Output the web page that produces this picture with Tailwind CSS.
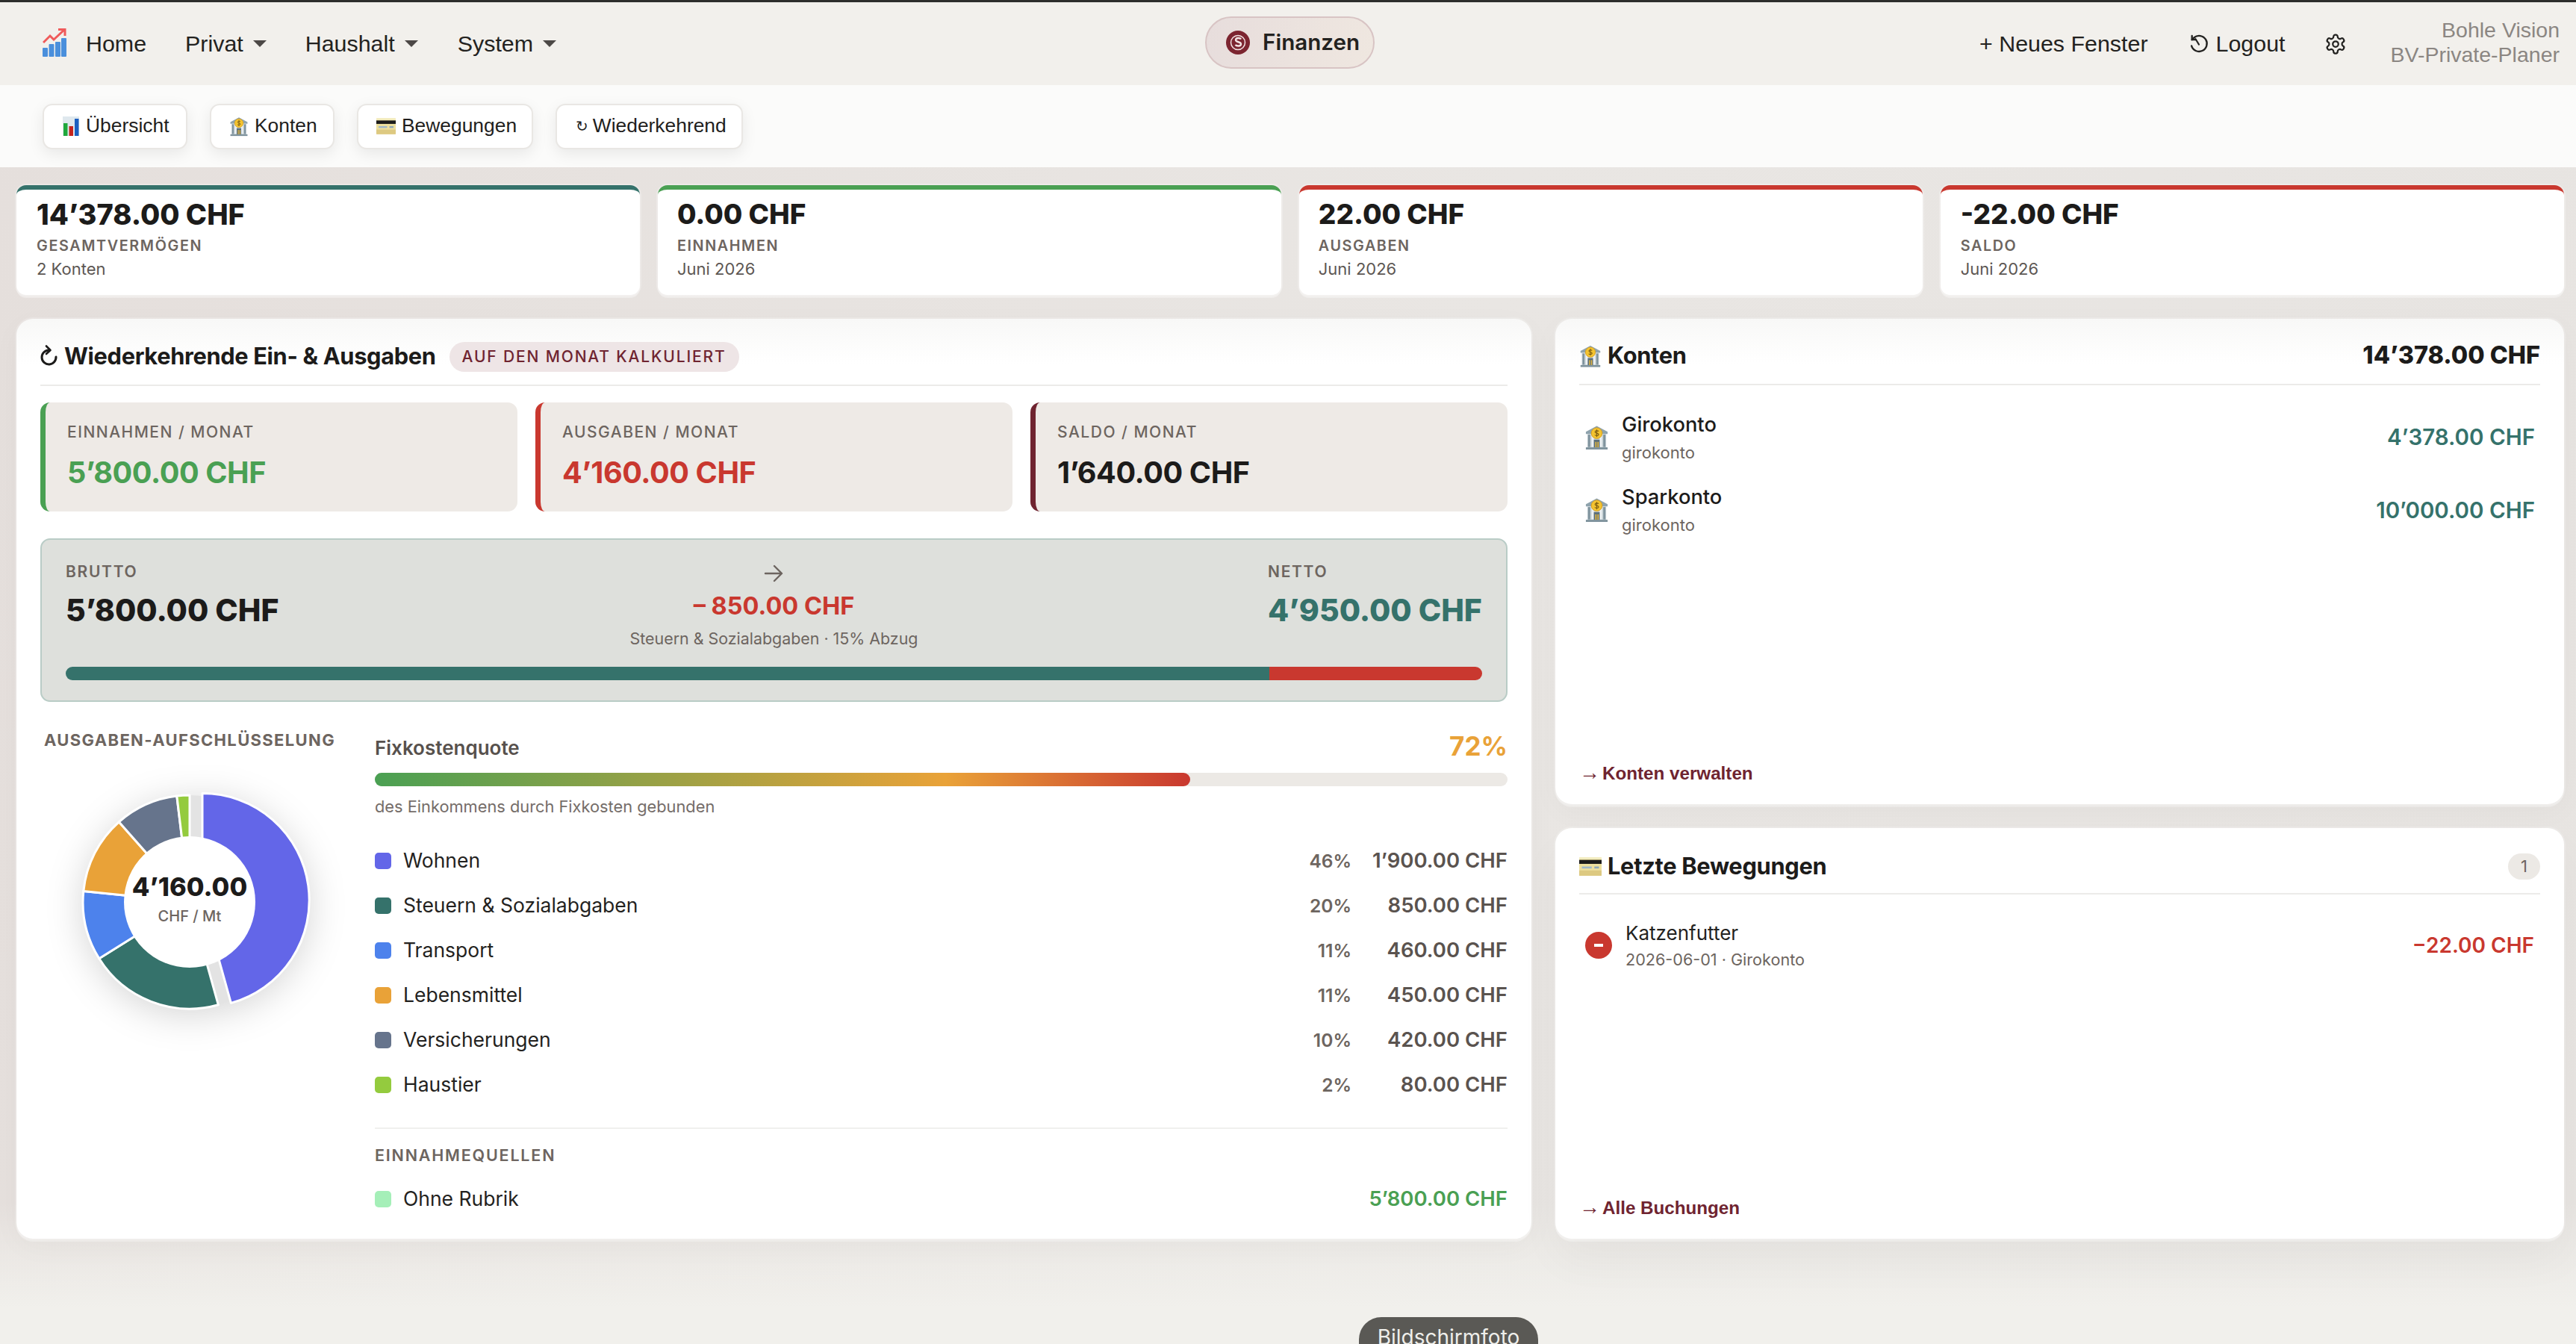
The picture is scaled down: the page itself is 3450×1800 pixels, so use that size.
<!DOCTYPE html>
<html lang="de">
<head>
<meta charset="utf-8">
<title>Finanzen</title>
<script src="https://cdn.jsdelivr.net/npm/@tailwindcss/browser@4"></script>
</head>
<body class="m-0">
<svg width="0" height="0" class="absolute">
  <defs>
    <symbol id="bank" viewBox="0 0 34 34">
      <path d="M17 1 L32 9 V12 H2 V9 Z" fill="#8fa3ad"/>
      <rect x="4" y="12" width="26" height="19" fill="#c9d3d8"/>
      <rect x="5" y="13" width="3" height="17" fill="#7f939d"/><rect x="10" y="13" width="3" height="17" fill="#eef2f4"/><rect x="21" y="13" width="3" height="17" fill="#eef2f4"/><rect x="26" y="13" width="3" height="17" fill="#7f939d"/>
      <rect x="13" y="20" width="8" height="11" fill="#5b6f7a"/><rect x="15" y="23" width="1.6" height="8" fill="#e9b93c"/><rect x="18" y="23" width="1.6" height="8" fill="#e9b93c"/>
      <rect x="2" y="30.5" width="30" height="3" fill="#7f939d"/>
      <circle cx="17" cy="11" r="7.5" fill="#f4c430" stroke="#d99f1c"/>
      <path d="M19.6 8.4c-.6-.9-4.8-1.4-4.9.8-.1 2.4 5 1.2 4.9 3.6-.1 2.100-4.600 1.700-5.300.6M17 5.800v10.400" fill="none" stroke="#7a5a10" stroke-width="1.200"/>
    </symbol>
    <symbol id="card" viewBox="0 0 34 28">
      <rect x="0" y="0" width="34" height="28" rx="1.500" fill="#ecdf9e"/>
      <rect x="0" y="0" width="34" height="3" fill="#f4eec4"/>
      <rect x="0" y="4" width="34" height="6" fill="#1b1b1b"/>
      <rect x="0" y="20" width="34" height="8" fill="#ddc981"/>
      <rect x="4" y="14" width="15" height="3" fill="#9fb7c9"/><rect x="23" y="14" width="7" height="3" fill="#8ea7ba"/>
    </symbol>
    <symbol id="chart" viewBox="0 0 22 26">
      <rect width="22" height="26" fill="#dfe8ee"/>
      <rect x="1" y="9" width="5.500" height="17" fill="#1fa83c"/>
      <rect x="8.500" y="13" width="5.500" height="13" fill="#c5231d"/>
      <rect x="16" y="3" width="5.500" height="23" fill="#1b5fc0"/>
    </symbol>
  </defs>
</svg>

<div class="relative w-[3450px] h-[1800px] overflow-hidden font-['Inter',sans-serif] text-[#1c1b1a] bg-[linear-gradient(100deg,#e5dfdc,#e9e6e3_55%,#e7e4e1)]">
  <div class="absolute inset-x-0 bottom-0 h-[190px] bg-[linear-gradient(rgba(241,240,236,0),#f1f0ec_75%)]"></div>

  <div class="relative h-[3px] bg-[#2e2e2c]"></div>

  <!-- Hauptnavigation -->
  <header class="relative flex items-center h-[111px] pl-[57px] pr-[22px] bg-[#f2f0ec] font-['Liberation_Sans',sans-serif] text-[30.400px] text-[#232220]">
    <div class="flex items-center w-[1557px]">
      <svg class="w-[32px] h-[38px] mr-[26px] -mt-[2px]" viewBox="0 0 32 38">
        <g fill="#4a8fdc"><rect x="0" y="26" width="7" height="12" rx="1"/><rect x="8.500" y="21" width="7" height="17" rx="1"/><rect x="17" y="18" width="7" height="20" rx="1"/><rect x="25" y="13" width="7" height="25" rx="1"/></g>
        <path d="M1 19 L10 10 L15 15 L29 2 M21 1.500 H30 V10" fill="none" stroke="#ef5a5a" stroke-width="3"/>
      </svg>
      <span class="mr-[52px]">Home</span>
      <span>Privat</span>
      <span class="ml-[13px] mr-[52px] w-0 h-0 border-x-[9.500px] border-x-transparent border-t-[9px] border-t-[#4c4846]"></span>
      <span>Haushalt</span>
      <span class="ml-[13px] mr-[53px] w-0 h-0 border-x-[9.500px] border-x-transparent border-t-[9px] border-t-[#4c4846]"></span>
      <span>System</span>
      <span class="ml-[13px] w-0 h-0 border-x-[9.500px] border-x-transparent border-t-[9px] border-t-[#4c4846]"></span>
    </div>
    <div class="flex items-center w-[227px] h-[70px] -mt-[4px] pl-[26px] rounded-full border-2 border-[#d8c4c4] bg-[linear-gradient(100deg,#e7dddc,#efe7e0)] font-['Inter',sans-serif] font-semibold text-[#232220]">
      <svg class="w-[32px] h-[32px] mr-[17px]" viewBox="0 0 32 32">
        <circle cx="16" cy="16" r="16" fill="#7c2530"/>
        <circle cx="16" cy="16" r="9.500" fill="none" stroke="#f3e4e4" stroke-width="1.500"/>
        <path d="M20 11.500c-1-2-7-2.500-7 1 0 3.500 7 2 7 5.500 0 3.500-6 3-7.500 1" fill="none" stroke="#f3e4e4" stroke-width="2.400"/>
      </svg>
      <span class="text-[29.600px]">Finanzen</span>
    </div>
    <div class="flex flex-1 items-center justify-end">
      <span class="mr-[54px]">+ Neues Fenster</span>
      <svg class="w-[28px] h-[28px] mr-[9px]" viewBox="0 0 24 24" fill="none" stroke="#232220" stroke-width="2" stroke-linecap="round" stroke-linejoin="round">
        <path d="M3.500 14a9 9 0 1 0 3-9.500L4 7"/><path d="M4 2.500V7h4.500"/><path d="M8 6l4 6.500" stroke-width="1.800"/>
      </svg>
      <span class="mr-[53px]">Logout</span>
      <svg class="w-[30px] h-[30px] mr-[58px]" viewBox="0 0 24 24" fill="none" stroke="#232220" stroke-width="1.800" stroke-linecap="round" stroke-linejoin="round">
        <path d="M12.220 2h-.440a2 2 0 0 0-2 2v.180a2 2 0 0 1-1 1.730l-.430.250a2 2 0 0 1-2 0l-.150-.080a2 2 0 0 0-2.730.730l-.220.380a2 2 0 0 0 .730 2.730l.150.100a2 2 0 0 1 1 1.720v.510a2 2 0 0 1-1 1.740l-.150.090a2 2 0 0 0-.730 2.730l.220.380a2 2 0 0 0 2.730.730l.150-.080a2 2 0 0 1 2 0l.430.250a2 2 0 0 1 1 1.730V20a2 2 0 0 0 2 2h.440a2 2 0 0 0 2-2v-.180a2 2 0 0 1 1-1.730l.430-.250a2 2 0 0 1 2 0l.150.080a2 2 0 0 0 2.730-.730l.220-.390a2 2 0 0 0-.730-2.730l-.150-.080a2 2 0 0 1-1-1.740v-.500a2 2 0 0 1 1-1.740l.150-.090a2 2 0 0 0 .730-2.730l-.220-.380a2 2 0 0 0-2.730-.730l-.150.080a2 2 0 0 1-2 0l-.430-.250a2 2 0 0 1-1-1.730V4a2 2 0 0 0-2-2z"/><circle cx="12" cy="12" r="3"/>
      </svg>
      <div class="flex flex-col items-end -mt-[3px] text-[28.500px] leading-[33px] text-[#8b8682]">
        <span>Bohle Vision</span>
        <span>BV-Private-Planer</span>
      </div>
    </div>
  </header>

  <!-- Unternavigation -->
  <nav class="relative flex items-center gap-[30px] h-[110px] px-[57px] bg-[#fbfbfa] font-['Liberation_Sans',sans-serif] text-[26.400px] text-[#1f1e1d]">
    <a class="flex items-center h-[61px] w-[194px] pl-[25px] rounded-[13px] border-2 border-[#e9e7e4] bg-white shadow-[0_6px_20px_rgba(0,0,0,0.08)]"><svg class="w-[22px] h-[26px] mr-[9px]"><use href="#chart"/></svg>Übersicht</a>
    <a class="flex items-center h-[61px] w-[167px] pl-[24px] rounded-[13px] border-2 border-[#e9e7e4] bg-white shadow-[0_6px_20px_rgba(0,0,0,0.08)]"><svg class="w-[26px] h-[27px] mr-[8px]"><use href="#bank"/></svg>Konten</a>
    <a class="flex items-center h-[61px] w-[236px] pl-[24px] rounded-[13px] border-2 border-[#e9e7e4] bg-white shadow-[0_6px_20px_rgba(0,0,0,0.08)]"><svg class="w-[26px] h-[22px] mr-[8px]"><use href="#card"/></svg>Bewegungen</a>
    <a class="flex items-center h-[61px] w-[251px] pl-[25px] rounded-[13px] border-2 border-[#e9e7e4] bg-white shadow-[0_6px_20px_rgba(0,0,0,0.08)]"><span class="mr-[6px] font-['DejaVu_Sans',sans-serif] text-[20px]">↻</span>Wiederkehrend</a>
  </nav>

  <main class="relative pl-[22px] pr-[16px] pt-[24px]">
    <!-- Kennzahlen -->
    <section class="grid grid-cols-4 gap-[23.600px]">
      <div class="h-[147px] pl-[27px] pt-[11px] rounded-[13px] border-t-[6px] border-[#35726b] bg-white shadow-[0_4px_0_rgba(255,255,255,0.35),0_0_0_2px_rgba(255,255,255,0.25)]">
        <div class="text-[38px] leading-[44px] font-extrabold text-[#1c1b1a]">14’378.00 CHF</div>
        <div class="mt-[7px] text-[19.800px] leading-[26px] font-semibold tracking-[1.600px] text-[#6d6560]">GESAMTVERMÖGEN</div>
        <div class="mt-[3px] text-[22px] leading-[30px] text-[#5d5753]">2 Konten</div>
      </div>
      <div class="h-[147px] pl-[26px] pt-[11px] rounded-[13px] border-t-[6px] border-[#4aa053] bg-white shadow-[0_4px_0_rgba(255,255,255,0.35),0_0_0_2px_rgba(255,255,255,0.25)]">
        <div class="text-[37px] leading-[44px] font-extrabold text-[#1c1b1a]">0.00 CHF</div>
        <div class="mt-[7px] text-[19.800px] leading-[26px] font-semibold tracking-[1.600px] text-[#6d6560]">EINNAHMEN</div>
        <div class="mt-[3px] text-[22px] leading-[30px] text-[#5d5753]">Juni 2026</div>
      </div>
      <div class="h-[147px] pl-[26px] pt-[11px] rounded-[13px] border-t-[6px] border-[#c9382f] bg-white shadow-[0_4px_0_rgba(255,255,255,0.35),0_0_0_2px_rgba(255,255,255,0.25)]">
        <div class="text-[37px] leading-[44px] font-extrabold text-[#1c1b1a]">22.00 CHF</div>
        <div class="mt-[7px] text-[19.800px] leading-[26px] font-semibold tracking-[1.600px] text-[#6d6560]">AUSGABEN</div>
        <div class="mt-[3px] text-[22px] leading-[30px] text-[#5d5753]">Juni 2026</div>
      </div>
      <div class="h-[147px] pl-[27px] pt-[11px] rounded-[13px] border-t-[6px] border-[#c9382f] bg-white shadow-[0_4px_0_rgba(255,255,255,0.35),0_0_0_2px_rgba(255,255,255,0.25)]">
        <div class="text-[37px] leading-[44px] font-extrabold text-[#1c1b1a]">-22.00 CHF</div>
        <div class="mt-[7px] text-[19.800px] leading-[26px] font-semibold tracking-[1.600px] text-[#6d6560]">SALDO</div>
        <div class="mt-[3px] text-[22px] leading-[30px] text-[#5d5753]">Juni 2026</div>
      </div>
    </section>

    <section class="grid grid-cols-[2029px_1351px] gap-[32px] mt-[32px]">
      <!-- Linke Karte -->
      <div class="h-[1232px] px-[32px] rounded-[22px] bg-[linear-gradient(#f8f8f7,#ffffff_60px)] shadow-[0_4px_0_rgba(255,255,255,0.3),0_0_0_2px_rgba(255,255,255,0.2),0_10px_40px_rgba(0,0,0,0.03)]">
        <div class="flex items-center h-[90px] pt-[12px] border-b-2 border-[#ecebe9]">
          <svg class="w-[24px] h-[30px] mr-[8px] -mt-[3px]" viewBox="0 0 24 30" fill="none" stroke="#1c1b1a" stroke-width="3" stroke-linecap="round" stroke-linejoin="round"><path d="M21 17a9.500 9.500 0 1 1-10.500-9"/><path d="M8 2.500l5.500 5.500L8 13" stroke-width="2.600"/></svg>
          <span class="text-[30.800px] font-bold tracking-[-0.350px]">Wiederkehrende Ein- &amp; Ausgaben</span>
          <span class="flex items-center justify-center w-[388px] h-[40px] mt-[2px] ml-[18px] rounded-full bg-[#eee5e6] text-[21px] font-medium tracking-[1.850px] text-[#6f2430]">AUF DEN MONAT KALKULIERT</span>
        </div>

        <div class="grid grid-cols-3 gap-[24px] mt-[22px]">
          <div class="h-[146px] pl-[29px] pt-[25px] rounded-[13px] border-l-[7px] border-[#4aa053] bg-[#eeeae6]">
            <div class="text-[21px] leading-[30px] font-medium tracking-[1.500px] text-[#6d6560]">EINNAHMEN / MONAT</div>
            <div class="mt-[14px] text-[39.600px] leading-[50px] font-bold tracking-[-0.400px] text-[#4aa053]">5’800.00 CHF</div>
          </div>
          <div class="h-[146px] pl-[29px] pt-[25px] rounded-[13px] border-l-[7px] border-[#c9382f] bg-[#eeeae6]">
            <div class="text-[21px] leading-[30px] font-medium tracking-[1.500px] text-[#6d6560]">AUSGABEN / MONAT</div>
            <div class="mt-[14px] text-[39.600px] leading-[50px] font-bold tracking-[-0.400px] text-[#c9382f]">4’160.00 CHF</div>
          </div>
          <div class="h-[146px] pl-[29px] pt-[25px] rounded-[13px] border-l-[7px] border-[#6f2430] bg-[#eeeae6]">
            <div class="text-[21px] leading-[30px] font-medium tracking-[1.500px] text-[#6d6560]">SALDO / MONAT</div>
            <div class="mt-[14px] text-[39.600px] leading-[50px] font-bold tracking-[-0.400px] text-[#1c1b1a]">1’640.00 CHF</div>
          </div>
        </div>

        <div class="h-[219px] mt-[36px] pt-[28px] px-[32px] rounded-[13px] border-2 border-[#b9ccc6] bg-[#dee0dc]">
          <div class="flex justify-between h-[142px]">
            <div class="w-[287px]">
              <div class="text-[21px] leading-[30px] font-semibold tracking-[1.700px] text-[#6d6560]">BRUTTO</div>
              <div class="mt-[11px] text-[41px] leading-[50px] font-extrabold text-[#1c1b1a] whitespace-nowrap">5’800.00 CHF</div>
            </div>
            <div class="flex flex-col items-center">
              <svg class="w-[28px] h-[34px]" viewBox="0 0 28 34" fill="none" stroke="#6d6560" stroke-width="2.400" stroke-linecap="round" stroke-linejoin="round"><path d="M3 17h22M15 7l10 10-10 10"/></svg>
              <div class="mt-[7px] text-[32.500px] leading-[40px] font-bold text-[#c9382f]">– 850.00 CHF</div>
              <div class="mt-[8px] text-[21.400px] leading-[30px] text-[#6d6560]">Steuern &amp; Sozialabgaben · 15% Abzug</div>
            </div>
            <div class="w-[287px]">
              <div class="text-[21px] leading-[30px] font-semibold tracking-[1.700px] text-[#6d6560]">NETTO</div>
              <div class="mt-[11px] text-[41px] leading-[50px] font-extrabold text-[#35726b] whitespace-nowrap">4’950.00 CHF</div>
            </div>
          </div>
          <div class="flex h-[18px] rounded-[9px] overflow-hidden">
            <div class="w-[85%] bg-[#35726b]"></div>
            <div class="flex-1 bg-[#c9382f]"></div>
          </div>
        </div>

        <div class="flex mt-[36px]">
          <div class="w-[448px]">
            <div class="pl-[5px] text-[22px] leading-[30px] font-bold tracking-[1.350px] text-[#6d6560] whitespace-nowrap">AUSGABEN-AUFSCHLÜSSELUNG</div>
            <div class="relative w-[400px] h-[400px] mt-[2px]">
              <svg class="w-[400px] h-[400px] overflow-visible drop-shadow-[0_8px_24px_rgba(0,0,0,0.16)]" viewBox="-200 -200 400 400">
                <circle r="143" fill="#e3e3e3"/>
                <g stroke="#ffffff" stroke-width="3" stroke-linejoin="round">
                  <path d="M0 0 L38.400 137.800 A143 143 0 0 1 -121.200 75.800 Z" fill="#35726b"/>
                  <path d="M0 0 L-121.200 75.800 A143 143 0 0 1 -142.200 -14.500 Z" fill="#4d82ec"/>
                  <path d="M0 0 L-142.200 -14.500 A143 143 0 0 1 -94.700 -107.200 Z" fill="#e9a238"/>
                  <path d="M0 0 L-94.700 -107.200 A143 143 0 0 1 -17.200 -142 Z" fill="#66748c"/>
                  <path d="M0 0 L-17.200 -142 A143 143 0 0 1 0 -143 Z" fill="#94cb3e"/>
                  <path d="M17 -2.400 L17 -145.400 A143 143 0 0 1 55.400 135.400 Z" fill="#6366e8"/>
                </g>
                <circle r="88" fill="#ffffff"/>
              </svg>
              <div class="absolute left-0 top-[157px] w-[400px] text-center">
                <div class="text-[34.400px] leading-[46px] font-extrabold text-[#1c1b1a]">4’160.00</div>
                <div class="mt-[2px] text-[20px] leading-[28px] font-medium text-[#6d6560]">CHF / Mt</div>
              </div>
            </div>
          </div>

          <div class="w-[1517px]">
            <div class="flex items-center justify-between h-[50px] pt-[1px]">
              <span class="text-[26px] font-semibold text-[#57514d]">Fixkostenquote</span>
              <span class="text-[35px] font-bold text-[#e9a238] -mt-[4px]">72%</span>
            </div>
            <div class="h-[18px] mt-[9px] rounded-[9px] bg-[#ece9e5]">
              <div class="w-[72%] h-[18px] rounded-[9px] bg-[linear-gradient(90deg,#4aa053,#e9a238_70%,#c9382f)]"></div>
            </div>
            <div class="mt-[12px] text-[21.800px] leading-[30px] text-[#756d69]">des Einkommens durch Fixkosten gebunden</div>

            <div class="mt-[28px]">
              <div class="flex items-center h-[60px]"><span class="w-[22px] h-[22px] mr-[16px] rounded-[5px] bg-[#6366e8]"></span><span class="flex-1 text-[26.500px] text-[#232220]">Wohnen</span><span class="w-[80px] text-right text-[24.500px] font-semibold text-[#6d6560]">46%</span><span class="w-[209px] text-right text-[27.500px] font-semibold text-[#5a534f]">1’900.00 CHF</span></div>
              <div class="flex items-center h-[60px]"><span class="w-[22px] h-[22px] mr-[16px] rounded-[5px] bg-[#35726b]"></span><span class="flex-1 text-[26.500px] text-[#232220]">Steuern &amp; Sozialabgaben</span><span class="w-[80px] text-right text-[24.500px] font-semibold text-[#6d6560]">20%</span><span class="w-[209px] text-right text-[27.500px] font-semibold text-[#5a534f]">850.00 CHF</span></div>
              <div class="flex items-center h-[60px]"><span class="w-[22px] h-[22px] mr-[16px] rounded-[5px] bg-[#4d82ec]"></span><span class="flex-1 text-[26.500px] text-[#232220]">Transport</span><span class="w-[80px] text-right text-[24.500px] font-semibold text-[#6d6560]">11%</span><span class="w-[209px] text-right text-[27.500px] font-semibold text-[#5a534f]">460.00 CHF</span></div>
              <div class="flex items-center h-[60px]"><span class="w-[22px] h-[22px] mr-[16px] rounded-[5px] bg-[#e9a238]"></span><span class="flex-1 text-[26.500px] text-[#232220]">Lebensmittel</span><span class="w-[80px] text-right text-[24.500px] font-semibold text-[#6d6560]">11%</span><span class="w-[209px] text-right text-[27.500px] font-semibold text-[#5a534f]">450.00 CHF</span></div>
              <div class="flex items-center h-[60px]"><span class="w-[22px] h-[22px] mr-[16px] rounded-[5px] bg-[#66748c]"></span><span class="flex-1 text-[26.500px] text-[#232220]">Versicherungen</span><span class="w-[80px] text-right text-[24.500px] font-semibold text-[#6d6560]">10%</span><span class="w-[209px] text-right text-[27.500px] font-semibold text-[#5a534f]">420.00 CHF</span></div>
              <div class="flex items-center h-[60px]"><span class="w-[22px] h-[22px] mr-[16px] rounded-[5px] bg-[#94cb3e]"></span><span class="flex-1 text-[26.500px] text-[#232220]">Haustier</span><span class="w-[80px] text-right text-[24.500px] font-semibold text-[#6d6560]">2%</span><span class="w-[209px] text-right text-[27.500px] font-semibold text-[#5a534f]">80.00 CHF</span></div>
            </div>

            <div class="mt-[27px] border-t-2 border-[#f0f0ee] pt-[20px] text-[21.500px] leading-[30px] font-semibold tracking-[1.800px] text-[#6d6560]">EINNAHMEQUELLEN</div>
            <div class="flex items-center h-[60px] mt-[14px]"><span class="w-[22px] h-[22px] mr-[16px] rounded-[5px] bg-[#a5efb8]"></span><span class="flex-1 text-[26.500px] text-[#232220]">Ohne Rubrik</span><span class="text-[27.500px] font-semibold text-[#4aa053]">5’800.00 CHF</span></div>
          </div>
        </div>
      </div>

      <!-- Rechte Spalte -->
      <div class="flex flex-col gap-[32px]">
        <div class="flex flex-col h-[650px] px-[32px] pb-[26px] rounded-[22px] bg-[linear-gradient(#f8f8f7,#ffffff_60px)] shadow-[0_4px_0_rgba(255,255,255,0.3),0_0_0_2px_rgba(255,255,255,0.2),0_10px_40px_rgba(0,0,0,0.03)]">
          <div class="flex items-center h-[89px] pt-[12px] border-b-2 border-[#ecebe9]">
            <svg class="w-[30px] h-[32px] mr-[8px]"><use href="#bank"/></svg>
            <span class="flex-1 text-[30.800px] font-bold tracking-[-0.300px]">Konten</span>
            <span class="text-[32.400px] font-extrabold">14’378.00 CHF</span>
          </div>
          <div class="flex items-center h-[70px] mt-[35px] px-[7px]">
            <svg class="w-[33px] h-[34px] mr-[17px]"><use href="#bank"/></svg>
            <div class="flex-1"><div class="text-[27.300px] leading-[36px] font-medium">Girokonto</div><div class="mt-[4px] text-[22px] leading-[30px] text-[#6d6560]">girokonto</div></div>
            <span class="text-[29.500px] font-semibold text-[#35726b] whitespace-nowrap -mt-[2px]">4’378.00 CHF</span>
          </div>
          <div class="flex items-center h-[70px] mt-[27px] px-[7px]">
            <svg class="w-[33px] h-[34px] mr-[17px]"><use href="#bank"/></svg>
            <div class="flex-1"><div class="text-[27.300px] leading-[36px] font-medium">Sparkonto</div><div class="mt-[4px] text-[22px] leading-[30px] text-[#6d6560]">girokonto</div></div>
            <span class="text-[29.500px] font-semibold text-[#35726b] whitespace-nowrap">10’000.00 CHF</span>
          </div>
          <a class="mt-auto font-['Liberation_Sans',sans-serif] text-[24.200px] leading-[30px] font-bold text-[#6f2430]"><span class="mr-[3px] text-[28px] font-normal">→</span>Konten verwalten</a>
        </div>

        <div class="flex flex-col h-[550px] px-[32px] pb-[26px] rounded-[22px] bg-white shadow-[0_4px_0_rgba(255,255,255,0.3),0_0_0_2px_rgba(255,255,255,0.2),0_30px_60px_rgba(0,0,0,0.035)]">
          <div class="flex items-center h-[89px] pt-[16px] border-b-2 border-[#ecebe9]">
            <svg class="w-[30px] h-[25px] mr-[8px]"><use href="#card"/></svg>
            <span class="flex-1 text-[30.800px] font-bold tracking-[-0.300px]">Letzte Bewegungen</span>
            <span class="flex items-center justify-center w-[43px] h-[35px] rounded-full bg-[#ece9e5] text-[22px] text-[#6d6560]">1</span>
          </div>
          <div class="flex items-center h-[68px] mt-[34px] px-[8px]">
            <span class="flex items-center justify-center w-[36px] h-[36px] mr-[18px] rounded-full bg-[#c9382f]"><span class="w-[12px] h-[4px] bg-white"></span></span>
            <div class="flex-1"><div class="text-[26px] leading-[36px] text-[#232220]">Katzenfutter</div><div class="mt-[2px] text-[21.600px] leading-[30px] text-[#6d6560]">2026-06-01 · Girokonto</div></div>
            <span class="text-[28px] font-semibold text-[#c9382f] whitespace-nowrap">−22.00 CHF</span>
          </div>
          <a class="mt-auto font-['Liberation_Sans',sans-serif] text-[24.200px] leading-[30px] font-bold text-[#6f2430]"><span class="mr-[3px] text-[28px] font-normal">→</span>Alle Buchungen</a>
        </div>
      </div>
    </section>
  </main>

  <!-- Overlay-Beschriftung -->
  <div class="absolute left-[1820px] top-[1764px] w-[240px] h-[70px] pt-[9px] rounded-[30px] bg-[#5a5955] text-center text-[28px] leading-[36px] text-[#eeeeea]">Bildschirmfoto</div>
</div>
</body>
</html>
